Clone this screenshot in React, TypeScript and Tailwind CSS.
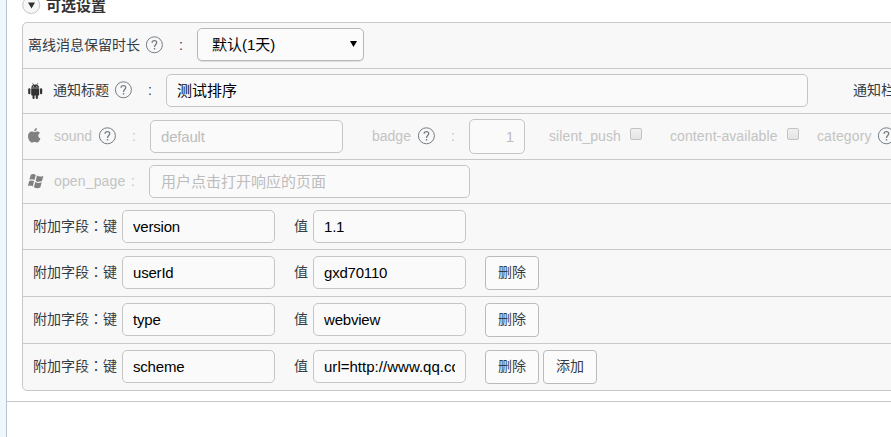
import React from 'react';

function Help({ className = '' }: { className?: string }) {
  return (
    <svg className={`h-[18px] w-[18px] shrink-0 ${className}`} viewBox="0 0 18 18" fill="none" stroke="#737d86">
      <circle cx="9.400" cy="8.800" r="8" strokeWidth="1" />
      <path d="M7.100 6.800C7.100 5.400 8 4.700 9.400 4.700s2.300.8 2.300 2c0 1.700-2.200 1.900-2.200 4.200" strokeWidth="1.300" />
      <path d="M9.500 12v1.500" strokeWidth="1.400" />
    </svg>
  );
}

function Android() {
  return (
    <svg className="h-4 w-[15px] shrink-0" viewBox="0 0 15 16" fill="#333">
      <path d="M3.200 4.800C3.200 2.600 5 1.400 7.200 1.400S11.200 2.600 11.200 4.800z" />
      <path d="M4.500.2l1.300 1.900M9.900.2L8.600 2.100" stroke="#333" strokeWidth=".7" />
      <circle cx="5.500" cy="3.200" r=".5" fill="#f8f8f8" />
      <circle cx="8.900" cy="3.200" r=".5" fill="#f8f8f8" />
      <path d="M3.200 5.300h8v6.500a.8.800 0 0 1-.8.800H4a.8.800 0 0 1-.8-.8z" />
      <rect x=".2" y="5.300" width="2.200" height="5.900" rx="1" />
      <rect x="12" y="5.300" width="2.200" height="5.900" rx="1" />
      <rect x="4.500" y="11" width="2.100" height="5" rx="1" />
      <rect x="7.800" y="11" width="2.100" height="5" rx="1" />
    </svg>
  );
}

function Apple() {
  return (
    <svg className="h-[15px] w-[13px] shrink-0" viewBox="0 0 13 15" fill="#808080">
      <path d="M8.900 0c.1 1.800-1.200 3.300-2.800 3.300C6 1.700 7.300.2 8.900 0z" />
      <path d="M6.400 4.300c.7 0 1.500-.7 2.800-.7 1.200 0 2.200.6 2.700 1.400-2.400 1.500-1.900 4.600.5 5.500C11.700 12.500 10.500 14.500 9.200 14.500c-1 0-1.400-.6-2.600-.6s-1.600.6-2.500.6C2.100 14.500 0 11.200 0 8.200c0-3 1.900-4.600 3.700-4.600 1.200 0 2 .7 2.700.7z" />
    </svg>
  );
}

function Windows() {
  return (
    <svg className="h-[15px] w-4 shrink-0" viewBox="0 0 16 15" fill="#808080">
      <path d="M2.800.7C4.500-.2 6.200-.1 7.800 1L6.400 6.100C4.800 5 3.100 5 1.400 5.800z" />
      <path d="M9 1.600c1.900 1.100 4 1.200 6.400.3L14 7.100c-2.200 1-4.400.9-6.400-.2z" />
      <path d="M1.200 7.100c1.800-.9 3.400-.8 4.900.2L4.700 12.500C3.200 11.400 1.600 11.300-.2 12.200z" />
      <path d="M7.300 8c2 1.100 4.100 1.200 6.400.3l-1.400 5.200c-2.200 1-4.400.9-6.400-.2z" />
    </svg>
  );
}

const field =
  'block shrink-0 rounded-[5px] border border-[#c5c5c5] bg-[#fafafa] px-[10px] text-[15px] text-black outline-none placeholder:text-[#bdbdbd]';

function Row({ className, children }: { className: string; children: React.ReactNode }) {
  return <div className={`flex items-start whitespace-nowrap border-b border-[#c8c8c8] ${className}`}>{children}</div>;
}

function Label({ className, children }: { className: string; children: React.ReactNode }) {
  return <span className={`shrink-0 leading-5 ${className}`}>{children}</span>;
}

function Check({ className }: { className: string }) {
  return (
    <span
      className={`h-[12px] w-[12px] shrink-0 rounded-[2px] border border-[#c4c4c4] bg-linear-to-b from-[#f1f1f1] to-[#e4e4e4] ${className}`}
    />
  );
}

function Button({ className, children }: { className: string; children: React.ReactNode }) {
  return (
    <button className={`mt-[6px] h-[34px] w-[54px] shrink-0 rounded border border-[#bbb] bg-[#fbfbfb] pb-[2px] text-sm text-[#333c46] ${className}`}>
      {children}
    </button>
  );
}

const extras = [
  { name: 'version', value: '1.1', tracking: 'tracking-[-0.2px]', height: 'h-[46px]', remove: false, add: false },
  { name: 'userId', value: 'gxd70110', tracking: 'tracking-[-0.2px]', height: 'h-[47px]', remove: true, add: false },
  { name: 'type', value: 'webview', tracking: 'tracking-[-0.2px]', height: 'h-[47px]', remove: true, add: false },
  { name: 'scheme', value: 'url=http://www.qq.com', tracking: 'tracking-[0.02px]', height: 'h-[46px] border-b-0', remove: true, add: true },
];

export default function App() {
  return (
    <div className="flex h-[437px] w-[891px] overflow-hidden bg-white font-['Liberation_Sans','Noto_Sans_CJK_SC',sans-serif] text-sm text-[#333c46]">
      <div className="w-[7px] shrink-0 border-r border-[#b5c3d2] bg-[#eff6fe]" />
      <main className="w-[884px] shrink-0">
        <section className="h-[402px] border-b border-[#c8c8c8] pl-[15px]">
          <header className="flex h-[22px] items-start">
            <svg className="-mt-1 h-[19px] w-[19px] shrink-0" viewBox="0 0 19 19">
              <circle cx="9.200" cy="9" r="8.500" fill="#f7f7f7" stroke="#c6c6c6" />
              <path d="M6 6.500h7l-3.500 6z" fill="#333" />
            </svg>
            <h2 className="-mt-[5px] ml-[5px] text-[15px] font-bold leading-[21px] text-[#333]">可选设置</h2>
          </header>
          <div className="h-[369px] w-[890px] rounded-[5px] border border-[#c8c8c8] bg-[#f8f8f8]">
            <Row className="h-[46px]">
              <Label className="ml-[5px] mt-3 w-[112px]">离线消息保留时长</Label>
              <Help className="ml-[5px] mt-[13px]" />
              <Label className="ml-[16px] mt-3 w-[18px]">:</Label>
              <div className="mt-[5px] flex h-[33px] w-[167px] shrink-0 items-center justify-between rounded-[5px] border border-[#b8b8b8] bg-[#fbfbfb] pl-[14px] pr-[6px] text-[15px] text-black shadow-[0_1px_1px_#ddd]">
                <span>默认(1天)</span>
                <svg className="mb-[2px] h-[6px] w-[7px]" viewBox="0 0 7 6"><path d="M0 0h7L3.500 6z" /></svg>
              </div>
            </Row>
            <Row className="h-[45px]">
              <div className="ml-[5px] mt-[14px]"><Android /></div>
              <Label className="ml-[10px] mt-[11px] w-14">通知标题</Label>
              <Help className="ml-[5px] mt-3" />
              <Label className="ml-[16px] mt-[11px] w-[18px]">:</Label>
              <input className={`${field} mt-[5px] h-[33px] w-[642px] pb-[2px]`} defaultValue="测试排序" />
              <Label className="ml-[45px] mt-[11px]">通知栏</Label>
            </Row>
            <Row className="h-[46px] text-[#c3c3c3]">
              <div className="ml-[5px] mt-[14px]"><Apple /></div>
              <Label className="ml-[13px] mt-3 w-[39px]">sound</Label>
              <Help className="ml-[5px] mt-[13px]" />
              <Label className="ml-[16px] mt-3 w-[18px]">:</Label>
              <input className={`${field} mt-[6px] h-[33px] w-[193px] tracking-[-0.2px]`} placeholder="default" />
              <Label className="ml-[29px] mt-3 w-[40px]">badge</Label>
              <Help className="ml-[5px] mt-[13px]" />
              <Label className="ml-[16px] mt-3 w-[18px]">:</Label>
              <input className={`${field} mt-[5px] h-[35px] w-[56px] text-right`} placeholder="1" />
              <Label className="ml-6 mt-3 w-[72px] tracking-[0.1px]">silent_push</Label>
              <Check className="ml-[9px] mt-[14px]" />
              <Label className="ml-7 mt-3 w-[108px] tracking-[0.1px]">content-available</Label>
              <Check className="ml-[9px] mt-[14px]" />
              <Label className="ml-[18px] mt-3 w-[55px] tracking-[0.1px]">category</Label>
              <Help className="ml-[5px] mt-[13px]" />
            </Row>
            <Row className="h-[44px] text-[#c3c3c3]">
              <div className="ml-[5px] mt-[14px]"><Windows /></div>
              <Label className="ml-[10px] mt-[11px] w-[77px] tracking-[0.15px]">open_page</Label>
              <Label className="mt-[11px] w-[18px]">:</Label>
              <input className={`${field} mt-[5px] h-[33px] w-[321px] pl-[11px]`} placeholder="用户点击打开响应的页面" />
            </Row>
            {extras.map((row) => (
              <Row key={row.name} className={row.height}>
                <Label className="ml-[10px] mt-[11px] w-[84px] font-['Noto_Sans_CJK_SC',sans-serif]">
                  附加字段<span className="font-['Noto_Sans_CJK_TC',sans-serif]" lang="zh-TW">：</span>键
                </Label>
                <input className={`${field} ml-[5px] mt-[6px] h-[33px] w-[153px] tracking-[-0.2px]`} defaultValue={row.name} />
                <Label className="ml-[19px] mt-3 w-[14px]">值</Label>
                <input className={`${field} ml-[5px] mt-[6px] h-[33px] w-[153px] ${row.tracking}`} defaultValue={row.value} />
                {row.remove && <Button className="ml-[19px]">删除</Button>}
                {row.add && <Button className="ml-1">添加</Button>}
              </Row>
            ))}
          </div>
        </section>
      </main>
    </div>
  );
}
